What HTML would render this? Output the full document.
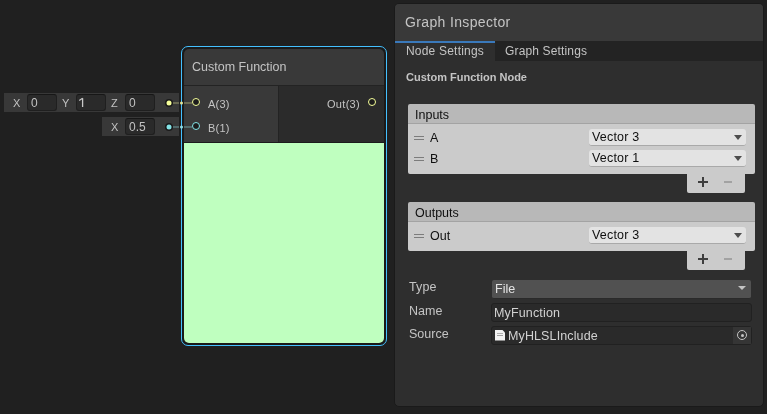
<!DOCTYPE html>
<html><head><meta charset="utf-8">
<style>
*{box-sizing:border-box;margin:0;padding:0}
html,body{width:767px;height:414px;overflow:hidden;background:#202020;font-family:"Liberation Sans",sans-serif}
.a{position:absolute}
.t{position:absolute;white-space:nowrap;line-height:1;will-change:transform}
/* left bars */
.bar{position:absolute;background:#383838}
.fld{position:absolute;background:#2a2a2a;border:1px solid #1f1f1f;border-top-color:#171717;border-radius:3px}
.lt{color:#c2c2c2;font-size:12px}
/* node */
#node{position:absolute;left:181px;top:46px;width:206px;height:300px;border:1px solid #44c0ff;border-radius:7px;background:#1a1a1a}
#node .in{position:absolute;left:2px;top:2px;right:2px;bottom:2px;border-radius:5px;overflow:hidden;background:#1a1a1a}
.port{position:absolute;width:8px;height:8px;border-radius:50%;background:#1c1c1c}
/* inspector */
#insp{position:absolute;left:394px;top:3px;width:370px;height:404px;background:#2e2e2e;border-radius:5px;border:1px solid #1a1a1a;overflow:hidden}
.hdr{position:absolute;background:#b8b8b8;border-radius:2px 2px 0 0;border-bottom:1px solid #a3a3a3}
.body{position:absolute;background:#cbcbcb;border-radius:0 0 2px 2px}
.dd{position:absolute;background:#e3e3e3;border-radius:3px;border-bottom:1px solid #a9a9a9}
.dt{color:#0f0f0f;font-size:12.5px}
.lbl{color:#c4c4c4;font-size:12.5px}
.arr{position:absolute;width:0;height:0;border-left:4px solid transparent;border-right:4px solid transparent;border-top:5px solid #4d4d4d}
.handle{position:absolute;width:10px;height:4px;border-top:1px solid #7c7c7c;border-bottom:1px solid #7c7c7c}
.foot{position:absolute;background:#cbcbcb;border-radius:0 0 2px 2px}
</style></head><body>

<!-- left value bars -->
<div class="bar" style="left:4px;top:93px;width:175px;height:19px"></div>
<div class="t lt" style="left:13px;top:98px;font-size:11px">X</div>
<div class="fld" style="left:27px;top:94px;width:30px;height:17px"></div>
<div class="t lt" style="left:31px;top:97px">0</div>
<div class="t lt" style="left:62px;top:98px;font-size:11px">Y</div>
<div class="fld" style="left:76px;top:94px;width:30px;height:17px"></div>
<svg class="a" style="left:78px;top:97px" width="7" height="11" viewBox="0 0 7 11"><path d="M4.6 1.2V10" stroke="#c8c8c8" stroke-width="1.3" fill="none"/><path d="M4.6 1.2L1.2 3.4" stroke="#c8c8c8" stroke-width="1.2" fill="none"/></svg>
<div class="t lt" style="left:111px;top:98px;font-size:11px">Z</div>
<div class="fld" style="left:125px;top:94px;width:30px;height:17px"></div>
<div class="t lt" style="left:129px;top:97px">0</div>

<div class="bar" style="left:102px;top:117px;width:77px;height:19px"></div>
<div class="t lt" style="left:111px;top:122px;font-size:11px">X</div>
<div class="fld" style="left:125px;top:118px;width:30px;height:17px"></div>
<div class="t lt" style="left:129px;top:121px">0.5</div>

<!-- node -->
<div id="node"><div class="in">
  <div class="a" style="left:0;top:0;width:202px;height:36px;background:#393939"></div>
  <div class="a" style="left:0;top:36px;width:202px;height:1px;background:#232323"></div>
  <div class="t" style="left:7.5px;top:12px;color:#c4c4c4;font-size:12.5px">Custom Function</div>
  <div class="a" style="left:0;top:37px;width:94px;height:56px;background:#393939"></div>
  <div class="a" style="left:94px;top:37px;width:1px;height:56px;background:#232323"></div>
  <div class="a" style="left:95px;top:37px;width:107px;height:56px;background:#2b2b2b"></div>
  <div class="a" style="left:0;top:94px;width:202px;height:200px;background:#bfffbf"></div>
  <div class="a" style="left:0;top:93px;width:202px;height:1px;background:#1c1b1c"></div>
</div></div>

<!-- wires -->
<div class="a" style="left:173px;top:102px;width:6px;height:2px;background:#6a6a52"></div>
<div class="a" style="left:184px;top:102px;width:8px;height:2px;background:#6a6a52"></div>
<div class="a" style="left:173px;top:126px;width:6px;height:2px;background:#526a6b"></div>
<div class="a" style="left:184px;top:126px;width:8px;height:2px;background:#526a6b"></div>
<div class="a" style="left:180px;top:101px;width:3px;height:3px;border-radius:50%;background:#e0e69a;transform:translate(0,0.5px)"></div>
<div class="a" style="left:180px;top:125px;width:3px;height:3px;border-radius:50%;background:#90dde6;transform:translate(0,0.5px)"></div>
<div class="a" style="left:166px;top:100px;width:5px;height:5px;border-radius:50%;background:#f6ff9a;box-shadow:0 0 0 1.5px #1a1a1a;transform:translate(0.5px,0.5px)"></div>
<div class="a" style="left:166px;top:124px;width:5px;height:5px;border-radius:50%;background:#84e4e7;box-shadow:0 0 0 1.5px #1a1a1a;transform:translate(0.5px,0.5px)"></div>

<div class="port" style="left:192px;top:98px;border:1px solid #f6ff9a"></div>
<div class="port" style="left:192px;top:122px;border:1px solid #84e4e7"></div>
<div class="port" style="left:368px;top:98px;border:1px solid #f6ff9a"></div>
<div class="t" style="left:208px;top:99px;color:#c4c4c4;font-size:11px;letter-spacing:0.2px">A(3)</div>
<div class="t" style="left:208px;top:123px;color:#c4c4c4;font-size:11px;letter-spacing:0.2px">B(1)</div>
<div class="t" style="left:327px;top:99px;color:#c4c4c4;font-size:11px;letter-spacing:0.3px">Out(3)</div>

<!-- inspector -->
<div id="insp"></div>
<div class="a" style="left:395px;top:4px;width:368px;height:37px;background:#393939;border-radius:4px 4px 0 0"></div>
<div class="t" style="left:405px;top:15px;color:#c4c4c4;font-size:14px;letter-spacing:0.35px">Graph Inspector</div>
<div class="a" style="left:395px;top:41px;width:100px;height:2px;background:#3a79bb"></div>
<div class="a" style="left:495px;top:41px;width:268px;height:20px;background:#232323"></div>
<div class="t" style="left:405.5px;top:45px;color:#c4c4c4;font-size:12px;letter-spacing:0.2px">Node Settings</div>
<div class="t" style="left:504.8px;top:45px;color:#c4c4c4;font-size:12px;letter-spacing:0.15px">Graph Settings</div>
<div class="t" style="left:405.5px;top:72px;color:#c4c4c4;font-size:11px;font-weight:bold">Custom Function Node</div>

<!-- inputs list -->
<div class="hdr" style="left:408px;top:104px;width:347px;height:20px"></div>
<div class="t dt" style="left:415px;top:109px">Inputs</div>
<div class="body" style="left:408px;top:124px;width:347px;height:50px"></div>
<div class="handle" style="left:414px;top:136px"></div>
<div class="t dt" style="left:430px;top:132px">A</div>
<div class="dd" style="left:589px;top:129px;width:157px;height:17px"></div>
<div class="t dt" style="left:592px;top:131px;letter-spacing:0.2px">Vector 3</div>
<div class="arr" style="left:734px;top:135px"></div>
<div class="handle" style="left:414px;top:157px"></div>
<div class="t dt" style="left:430px;top:153px">B</div>
<div class="dd" style="left:589px;top:150px;width:157px;height:17px"></div>
<div class="t dt" style="left:592px;top:152px;letter-spacing:0.2px">Vector 1</div>
<div class="arr" style="left:734px;top:156px"></div>
<div class="foot" style="left:687px;top:174px;width:58px;height:19px"></div>
<div class="a" style="left:698px;top:181px;width:10px;height:2px;background:#3e3e3e"></div>
<div class="a" style="left:702px;top:177px;width:2px;height:10px;background:#3e3e3e"></div>
<div class="a" style="left:724px;top:181px;width:8px;height:2px;background:#a2a2a2"></div>

<!-- outputs list -->
<div class="hdr" style="left:408px;top:202px;width:347px;height:20px"></div>
<div class="t dt" style="left:415px;top:207px">Outputs</div>
<div class="body" style="left:408px;top:222px;width:347px;height:29px"></div>
<div class="handle" style="left:414px;top:234px"></div>
<div class="t dt" style="left:430px;top:230px">Out</div>
<div class="dd" style="left:589px;top:227px;width:157px;height:17px"></div>
<div class="t dt" style="left:592px;top:229px;letter-spacing:0.2px">Vector 3</div>
<div class="arr" style="left:734px;top:233px"></div>
<div class="foot" style="left:687px;top:251px;width:58px;height:19px"></div>
<div class="a" style="left:698px;top:258px;width:10px;height:2px;background:#3e3e3e"></div>
<div class="a" style="left:702px;top:254px;width:2px;height:10px;background:#3e3e3e"></div>
<div class="a" style="left:724px;top:258px;width:8px;height:2px;background:#a2a2a2"></div>

<!-- properties -->
<div class="t lbl" style="left:409px;top:281px;letter-spacing:0.1px">Type</div>
<div class="a" style="left:492px;top:280px;width:259px;height:19px;background:#515151;border-radius:2px;border-bottom:1px solid #2a2a2a"></div>
<div class="t" style="left:495px;top:283px;color:#e4e4e4;font-size:12.5px">File</div>
<div class="arr" style="left:738px;top:286px;border-top:4px solid #c4c4c4"></div>
<div class="t lbl" style="left:409px;top:305px">Name</div>
<div class="a" style="left:491px;top:303px;width:261px;height:19px;background:#2a2a2a;border:1px solid #212121;border-radius:3px"></div>
<div class="t" style="left:494px;top:307px;color:#d2d2d2;font-size:12.5px;letter-spacing:0.15px">MyFunction</div>
<div class="t lbl" style="left:409px;top:328px">Source</div>
<div class="a" style="left:491px;top:326px;width:261px;height:19px;background:#2a2a2a;border:1px solid #212121;border-radius:3px"></div>
<div class="a" style="left:733px;top:327px;width:18px;height:17px;background:#353535"></div>
<div class="a" style="left:737px;top:330px;width:10px;height:10px;border:1px solid #c4c4c4;border-radius:50%"></div>
<div class="a" style="left:740.5px;top:333.5px;width:3px;height:3px;background:#c4c4c4;border-radius:50%"></div>
<svg class="a" style="left:495px;top:330px" width="10" height="11" viewBox="0 0 10 11"><path d="M0 0H7.5L10 2.5V10.5H0Z" fill="#f2f2f2"/><rect x="2" y="3" width="6" height="1" fill="#b0b0b0"/><rect x="2" y="5" width="6" height="1" fill="#a0a0a0"/></svg>
<div class="t" style="left:508px;top:330px;color:#d2d2d2;font-size:12.5px;letter-spacing:0.12px">MyHLSLInclude</div>

</body></html>
